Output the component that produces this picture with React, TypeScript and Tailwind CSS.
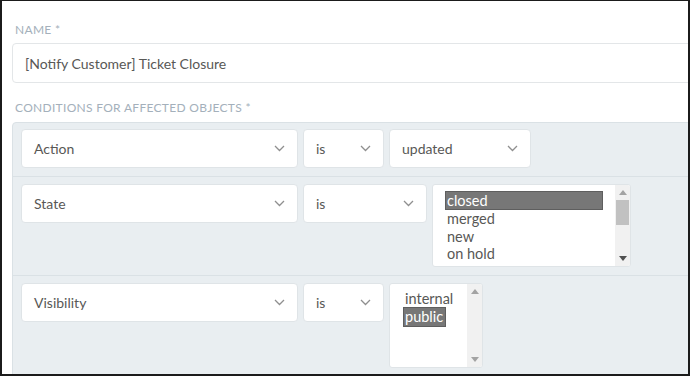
import React from "react";

const font = { fontFamily: "Lato, 'Open Sans', sans-serif" };

function Chevron() {
  return (
    <svg width="11" height="7" viewBox="0 0 11 7" className="shrink-0">
      <polyline points="1,1 5.5,5.5 10,1" fill="none" stroke="#8f8f8f" strokeWidth="1.3" />
    </svg>
  );
}

function Select({ label, width }: { label: string; width: string }) {
  return (
    <div
      className={`flex h-[39px] shrink-0 items-center justify-between rounded-[4px] border border-[#dfe4e7] bg-white pl-[12px] pr-[12px] text-[14px] text-[#585856] ${width}`}
    >
      <span>{label}</span>
      <Chevron />
    </div>
  );
}

function Arrow({ up, color }: { up?: boolean; color: string }) {
  return (
    <svg width="8" height="5" viewBox="0 0 8 5">
      <polygon points={up ? "0,5 4,0 8,5" : "0,0 8,0 4,5"} fill={color} />
    </svg>
  );
}

export default function App() {
  return (
    <div
      className="h-[376px] w-[690px] overflow-hidden border-t border-r-2 border-b-2 border-l-2 border-[#1b1b1b] bg-white"
      style={font}
    >
      <div className="w-[720px] pl-[10px]">
        {/* Name */}
        <div className="pt-[21px] pl-[3px] text-[12px] leading-[16px] tracking-[0.3px] text-[#a4b0bb]">NAME *</div>
        <div className="mt-[5px] flex h-[40px] items-center rounded-[4px] border border-[#e3e6e8] pl-[12px] text-[14px] text-[#585856]">
          [Notify Customer] Ticket Closure
        </div>

        {/* Conditions */}
        <div className="mt-[17px] pl-[3px] text-[12px] leading-[16px] tracking-[0.3px] text-[#a4b0bb]">
          CONDITIONS FOR AFFECTED OBJECTS *
        </div>
        <div className="mt-[6px] rounded-tl-[4px] border border-[#dae1e5] bg-[#e9eef1]">
          <div className="flex items-start gap-[5px] border-b border-[#dae1e5] px-[8px] pt-[6px] pb-[8px]">
            <Select label="Action" width="w-[277px]" />
            <Select label="is" width="w-[81px]" />
            <Select label="updated" width="w-[142px]" />
          </div>

          <div className="flex items-start gap-[5px] border-b border-[#dae1e5] px-[8px] pt-[7px] pb-[8px]">
            <Select label="State" width="w-[277px]" />
            <Select label="is" width="w-[124px]" />
            <div className="flex h-[83px] w-[199px] shrink-0 overflow-hidden rounded-[3px] border border-[#dfe4e7] bg-white">
              <div className="flex-1 overflow-hidden pt-[6px] pl-[12px] text-[14.5px] leading-[17.33px] text-[#585856]">
                <div className="border border-[#5e5e5e] bg-[#777777] pl-[1px] text-white">closed</div>
                <div className="pl-[2px]">merged</div>
                <div className="pl-[2px]">new</div>
                <div className="pl-[2px]">on hold</div>
                <div className="pl-[2px]">open</div>
              </div>
              <div className="ml-[12px] flex w-[15px] flex-col items-center bg-[#f1f1f1]">
                <div className="flex h-[15px] items-center">
                  <Arrow up color="#a3a3a3" />
                </div>
                <div className="h-[25px] w-[13px] bg-[#c1c1c1]" />
                <div className="flex-1" />
                <div className="flex h-[15px] items-center">
                  <Arrow color="#505050" />
                </div>
              </div>
            </div>
          </div>

          <div className="flex h-[110px] items-start gap-[5px] px-[8px] pt-[7px]">
            <Select label="Visibility" width="w-[277px]" />
            <Select label="is" width="w-[81px]" />
            <div className="flex h-[85px] w-[94px] shrink-0 overflow-hidden rounded-[3px] border border-[#dfe4e7] bg-white">
              <div className="flex-1 overflow-hidden pt-[6px] pl-[13px] text-[14.5px] leading-[17.33px] text-[#585856]">
                <div className="pl-[2px]">internal</div>
                <div className="inline-block border border-[#5e5e5e] bg-[#777777] pr-[2px] pl-[1px] text-white">public</div>
              </div>
              <div className="flex w-[15px] flex-col items-center bg-[#f1f1f1]">
                <div className="flex h-[15px] items-center">
                  <Arrow up color="#a3a3a3" />
                </div>
                <div className="flex-1" />
                <div className="flex h-[15px] items-center">
                  <Arrow color="#a3a3a3" />
                </div>
              </div>
            </div>
          </div>
        </div>
      </div>
    </div>
  );
}
